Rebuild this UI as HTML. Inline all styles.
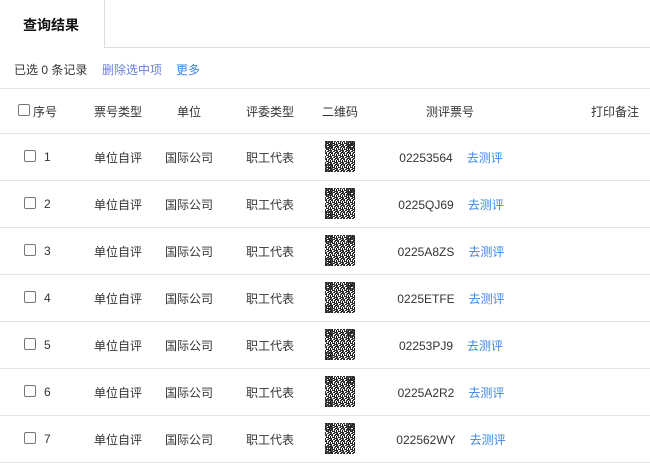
<!DOCTYPE html>
<html><head><meta charset="utf-8"><style>
*{margin:0;padding:0;box-sizing:border-box}
body{width:650px;height:450px;overflow:hidden;background:#fff;font-family:"Liberation Sans","Noto Sans CJK SC",sans-serif;font-size:12px;color:#333;position:relative}
.a{position:absolute;white-space:nowrap}
.line{position:absolute;left:0;width:650px;height:1px;background:#e4e4e4}
.cb{position:absolute;width:12px;height:12px;border:1px solid #777;border-radius:2px;background:#fff}
.c{position:absolute;transform:translateX(-50%);white-space:nowrap}
.blue{color:#3a86e8}
.qr{position:absolute;left:325px;width:30px;height:31px}
</style></head><body>
<svg width="0" height="0" style="position:absolute">
<defs>
<pattern id="n" width="6" height="6" patternUnits="userSpaceOnUse">
<rect width="6" height="6" fill="#fff"/>
<rect x="0" y="0" width="2" height="1" fill="#222"/><rect x="3" y="0" width="1" height="2" fill="#333"/>
<rect x="1" y="2" width="3" height="1" fill="#222"/><rect x="5" y="1" width="1" height="2" fill="#111"/>
<rect x="0" y="3" width="1" height="2" fill="#333"/><rect x="2" y="4" width="2" height="1" fill="#222"/>
<rect x="4" y="3" width="2" height="1" fill="#222"/><rect x="4" y="5" width="2" height="1" fill="#111"/>
<rect x="1" y="5" width="1" height="1" fill="#333"/><rect x="1" y="1" width="1" height="1" fill="#444"/>
<rect x="4" y="0" width="1" height="1" fill="#444"/><rect x="3" y="3" width="1" height="1" fill="#444"/>
<rect x="5" y="4" width="1" height="1" fill="#444"/><rect x="0" y="5" width="1" height="1" fill="#555"/>
</pattern>
<symbol id="q" viewBox="0 0 30 31">
<rect width="30" height="31" fill="url(#n)"/>
<g fill="none" stroke="#222" stroke-width="1.5">
<rect x="1" y="1" width="6" height="6"/><rect x="23" y="1" width="6" height="6"/><rect x="1" y="24" width="6" height="6"/></g>
<rect x="3" y="3" width="2" height="2" fill="#222"/><rect x="25" y="3" width="2" height="2" fill="#222"/><rect x="3" y="26" width="2" height="2" fill="#222"/>
</symbol></defs></svg>

<div class="a" style="left:23px;top:15px;font-size:14px;font-weight:bold;color:#111">查询结果</div>
<div class="a" style="left:104px;top:0;width:1px;height:48px;background:#ddd"></div>
<div class="a" style="left:104px;top:47px;width:546px;height:1px;background:#ddd"></div>

<div class="a" style="left:14px;top:61px">已选 0 条记录</div>
<div class="a" style="left:102px;top:61px;color:#6a7fe0">删除选中项</div>
<div class="a" style="left:176px;top:61px"><span class="blue">更多</span></div>

<div class="line" style="top:88px"></div>
<div class="cb" style="left:18px;top:104px"></div>
<div class="a" style="left:33px;top:103px">序号</div>
<div class="c" style="left:118px;top:103px">票号类型</div>
<div class="c" style="left:189px;top:103px">单位</div>
<div class="c" style="left:270px;top:103px">评委类型</div>
<div class="c" style="left:340px;top:103px">二维码</div>
<div class="c" style="left:450px;top:103px">测评票号</div>
<div class="a" style="right:11px;top:103px">打印备注</div>
<div class="line" style="top:133px"></div>

<div id="rows"></div>
<script>
var t=["02253564","0225QJ69","0225A8ZS","0225ETFE","02253PJ9","0225A2R2","022562WY"];
var h="";
for(var i=0;i<7;i++){var y=133+47*i;
h+='<div class="cb" style="left:24px;top:'+(y+17)+'px"></div>'+
'<div class="a" style="left:44px;top:'+(y+17)+'px">'+(i+1)+'</div>'+
'<div class="c" style="left:118px;top:'+(y+16)+'px">单位自评</div>'+
'<div class="c" style="left:189px;top:'+(y+16)+'px">国际公司</div>'+
'<div class="c" style="left:270px;top:'+(y+16)+'px">职工代表</div>'+
'<svg class="qr" style="top:'+(y+8)+'px"><use href="#q"/></svg>'+
'<div class="c" style="left:451px;top:'+(y+16)+'px">'+t[i]+'<span class="blue" style="margin-left:14px">去测评</span></div>'+
'<div class="line" style="top:'+(y+47)+'px"></div>';}
document.getElementById("rows").innerHTML=h;
</script>
</body></html>
